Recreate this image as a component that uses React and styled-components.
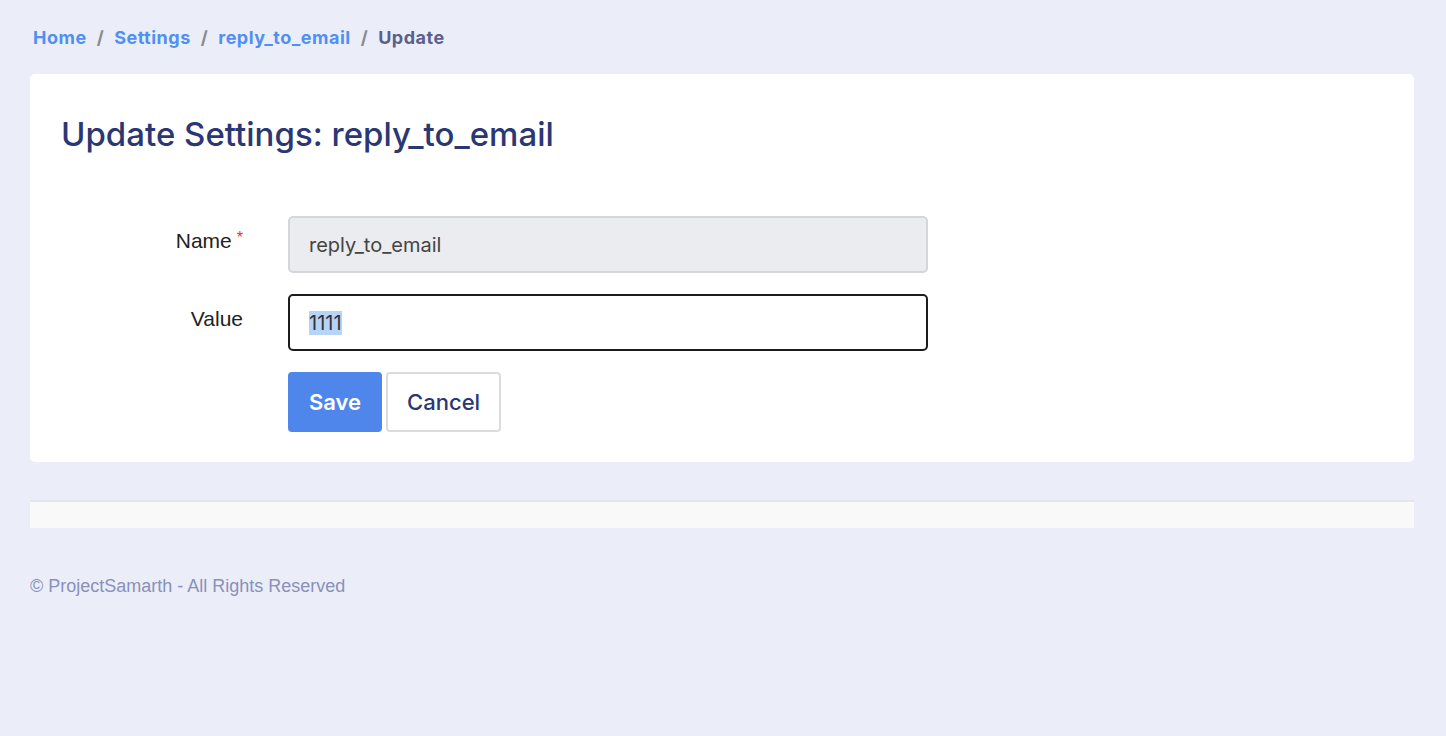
import { useEffect, useRef } from 'react';
import styled, { createGlobalStyle } from 'styled-components';

const GlobalStyle = createGlobalStyle`
  html, body {
    margin: 0;
    padding: 0;
    background-color: #ebeef8;
    font-family: Inter, "Liberation Sans", sans-serif;
  }
`;

const Page = styled.div`
  padding: 23px 32px 60px 30px;
  min-height: 100vh;
  box-sizing: border-box;
`;

const Breadcrumb = styled.nav`
  display: flex;
  align-items: center;
  gap: 10px;
  padding-left: 3px;
  height: 28px;
  margin-bottom: 23px;
  font-size: 18px;
  font-weight: 700;
  letter-spacing: 0.5px;
`;

const Crumb = styled.a`
  color: ${(p) => (p.$active ? '#5a5f8f' : '#5090f2')};
  text-decoration: none;
`;

const Slash = styled.span`
  color: #8a8a8a;
`;

const Card = styled.section`
  background-color: #fff;
  border-radius: 5px;
  padding: 40px 31px 30px;
`;

const Title = styled.h1`
  margin: 0 0 62px;
  font-size: 33px;
  line-height: 40px;
  font-weight: 500;
  color: #2b3773;
`;

const Form = styled.form`
  display: flex;
  flex-direction: column;
  gap: 21px;
`;

const Row = styled.div`
  display: grid;
  grid-template-columns: 182px 640px;
  column-gap: 45px;
`;

const Label = styled.label`
  text-align: right;
  padding-top: 13px;
  font-family: "Liberation Sans", Arial, sans-serif;
  font-size: 21px;
  color: #222;
`;

const Required = styled.span`
  color: #e0302e;
  font-size: 16px;
  margin-left: 5px;
  vertical-align: top;
`;

const Input = styled.input`
  box-sizing: border-box;
  width: 100%;
  height: 57px;
  padding: 0 19px;
  font-family: Inter, "Liberation Sans", sans-serif;
  font-size: 20px;
  color: #444;
  background-color: ${(p) => (p.readOnly ? '#ebecf0' : '#fff')};
  border: ${(p) => (p.readOnly ? '2px solid #d4d6dc' : '2px solid #1c1c1c')};
  border-radius: 5px;
  outline: none;

  &::selection {
    background-color: #b5d4f8;
    color: #333;
  }
`;

const Actions = styled.div`
  grid-column: 2;
  display: flex;
  gap: 4px;
`;

const Button = styled.button`
  height: 60px;
  padding: 0 19px;
  font-family: Inter, "Liberation Sans", sans-serif;
  font-size: 22px;
  font-weight: ${(p) => (p.$primary ? 600 : 500)};
  border-radius: 4px;
  cursor: pointer;
  color: ${(p) => (p.$primary ? '#fff' : '#2b3773')};
  background-color: ${(p) => (p.$primary ? '#4f86ec' : '#fff')};
  border: ${(p) => (p.$primary ? '2px solid #4f86ec' : '2px solid #dcdcdc')};
`;

const Strip = styled.div`
  margin-top: 38px;
  height: 26px;
  background-color: #f9f9f9;
  border-top: 2px solid #e4e6ea;
`;

const Footer = styled.footer`
  margin-top: 48px;
  font-family: "Liberation Sans", Arial, sans-serif;
  font-size: 18px;
  color: #8a90ba;
`;

const App = () => {
  const valueRef = useRef(null);

  useEffect(() => {
    if (valueRef.current) {
      valueRef.current.focus();
      valueRef.current.select();
    }
  }, []);

  return (
    <>
      <GlobalStyle />
      <Page>
        <Breadcrumb>
          <Crumb href="#">Home</Crumb>
          <Slash>/</Slash>
          <Crumb href="#">Settings</Crumb>
          <Slash>/</Slash>
          <Crumb href="#">reply_to_email</Crumb>
          <Slash>/</Slash>
          <Crumb $active>Update</Crumb>
        </Breadcrumb>
        <Card>
          <Title>Update Settings: reply_to_email</Title>
          <Form onSubmit={(e) => e.preventDefault()}>
            <Row>
              <Label htmlFor="name">
                Name<Required>*</Required>
              </Label>
              <Input id="name" readOnly defaultValue="reply_to_email" />
            </Row>
            <Row>
              <Label htmlFor="value">Value</Label>
              <Input id="value" ref={valueRef} defaultValue="1111" />
            </Row>
            <Row>
              <Actions>
                <Button $primary type="submit">Save</Button>
                <Button type="button">Cancel</Button>
              </Actions>
            </Row>
          </Form>
        </Card>
        <Strip />
        <Footer>© ProjectSamarth - All Rights Reserved</Footer>
      </Page>
    </>
  );
};

export default App;
